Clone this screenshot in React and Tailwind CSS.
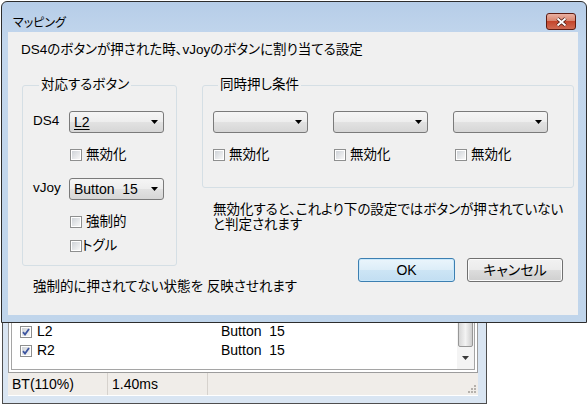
import React from "react";

const FONT = "font-['Liberation_Sans','Noto_Sans_CJK_JP',sans-serif]";

const Check = ({ checked }) => (
  <span className="flex h-[12px] w-[12px] shrink-0 border border-[#8e8f8f] bg-white p-[1px]">
    <span className="flex flex-1 items-center justify-center bg-linear-to-br from-[#cfd3d8] to-[#f7f7f7]">
      {checked && (
        <svg width="8" height="8" viewBox="0 0 8 8">
          <path d="M1 4.2 L3 6.5 L7 1" fill="none" stroke="#3d55a0" strokeWidth="1.8" />
        </svg>
      )}
    </span>
  </span>
);

const Arrow = () => (
  <svg width="7" height="4" viewBox="0 0 7 4" className="shrink-0">
    <path d="M0 0H7L3.5 4Z" fill="#000" />
  </svg>
);

const Combo = ({ value, focus }) => (
  <div className="flex h-[22px] w-[95px] shrink-0 items-center rounded-[3px] border border-[#7a7a7a] bg-[linear-gradient(#f5f5f5,#ededed_50%,#e2e2e2_50%,#d6d6d6)] pl-[4px] pr-[5px] text-[14px]">
    <span className={focus ? "flex-1 whitespace-pre leading-[16px] underline underline-offset-2" : "flex-1 whitespace-pre leading-[16px]"}>
      {value}
    </span>
    <Arrow />
  </div>
);

const CheckLabel = ({ label, tight }) => (
  <div className={tight ? "flex h-[16px] items-center" : "flex h-[16px] items-center gap-[4px]"}>
    <Check />
    <span className="leading-[16px]">{label}</span>
  </div>
);

const Button = ({ children, primary }) => (
  <div
    className={
      primary
        ? "flex h-[24px] w-[97px] items-center justify-center rounded-[3px] border border-[#3c7fb1] bg-[linear-gradient(#eaf5fc,#dcedf8_50%,#cde5f5_50%,#c2def2)] shadow-[inset_0_0_0_1px_#c9e8fb]"
        : "flex h-[24px] w-[96px] items-center justify-center rounded-[3px] border border-[#707070] bg-[linear-gradient(#f2f2f2,#ebebeb_50%,#dddddd_50%,#cfcfcf)] shadow-[inset_0_0_0_1px_#fbfbfb]"
    }
  >
    {children}
  </div>
);

const MainWindow = () => (
  <div className="absolute left-[2px] top-[250px] flex h-[154px] w-[485px] flex-col border border-[#4e4e4e] bg-[#d9e5f2] pl-[5px] pr-[8px] pb-[7px]">
    {/* list view with double edge */}
    <div className="flex flex-1 flex-col border border-[#9c9c9c] bg-white p-[2px]">
      <div className="flex flex-1 border border-[#a5a5a5] bg-white">
        <div className="flex flex-1 flex-col justify-end pb-[9px]">
          {["L2", "R2"].map((name) => (
            <div key={name} className="flex h-[19px] items-center">
              <div className="flex w-[209px] items-center gap-[5px] pl-[8px]">
                <Check checked />
                <span>{name}</span>
              </div>
              <span className="whitespace-pre">Button  15</span>
            </div>
          ))}
        </div>
        <div className="flex w-[17px] flex-col bg-[#f4f4f4] pb-[3px]">
          <div className="mx-[1px] mb-[2px] flex-1 rounded-b-[2px] border border-[#979797] bg-[linear-gradient(to_right,#d6d6d6,#f3f3f3_50%,#cdcdcd)]" />
          <div className="flex h-[17px] items-center justify-center">
            <svg width="7" height="4" viewBox="0 0 7 4">
              <path d="M0 0H7L3.5 4Z" fill="#3a3a3a" />
            </svg>
          </div>
        </div>
      </div>
    </div>
    {/* status bar */}
    <div className="flex h-[23px] items-center border-b border-white bg-[#f0ede9]">
      <div className="flex h-full w-[100px] items-center border-r border-[#d6d2cd] pl-[4px]">BT(110%)</div>
      <div className="flex h-full w-[100px] items-center border-r border-[#d6d2cd] pl-[4px]">1.40ms</div>
      <div className="flex h-full flex-1 items-end justify-end pb-[2px] pr-[2px]">
        <svg width="9" height="9" viewBox="0 0 9 9">
          <g fill="#b5b1ac">
            <rect x="7" y="1" width="2" height="2" />
            <rect x="4" y="4" width="2" height="2" />
            <rect x="7" y="4" width="2" height="2" />
            <rect x="1" y="7" width="2" height="2" />
            <rect x="4" y="7" width="2" height="2" />
            <rect x="7" y="7" width="2" height="2" />
          </g>
        </svg>
      </div>
    </div>
  </div>
);

const Dialog = () => (
  <div className="absolute left-[1px] top-[1px] flex h-[322px] w-[586px] flex-col rounded-t-[6px] border border-[#2d2d2d] bg-[linear-gradient(#b6cde8,#c3d7ed_40px,#c0d5eb)] pl-[6px] pr-[8px] pb-[7px]">
    {/* title bar */}
    <div className="flex h-[30px] items-center pl-[5px] pr-[2px] pt-[9px]">
      <span className="flex-1 font-['Noto_Sans_CJK_JP',sans-serif] text-[12px] leading-[16px] text-black">
        マッピング
      </span>
      <div className="flex h-[17px] w-[30px] items-center justify-center rounded-[3px] border border-[#5e1c12] bg-[linear-gradient(#eab0a2,#d98670_45%,#c4462c_50%,#cf6a52)]">
        <svg width="13" height="10" viewBox="0 0 13 10">
          <path d="M2.5 1.5L10.5 8.5M10.5 1.5L2.5 8.5" stroke="#4a1a12" strokeWidth="3.6" />
          <path d="M2.5 1.5L10.5 8.5M10.5 1.5L2.5 8.5" stroke="#ffffff" strokeWidth="1.9" />
        </svg>
      </div>
    </div>

    {/* client area */}
    <div className="flex flex-1 flex-col bg-[#f0f0f0] pl-[13px] pt-[10px] text-[13.5px] text-black">
      <p className="leading-[16px]">DS4のボタンが押された時、vJoyのボタンに割り当てる設定</p>

      <div className="mt-[19px] flex">
        {/* left column */}
        <div className="ml-[1px] flex w-[155px] shrink-0 flex-col">
          <fieldset className="w-[155px] rounded-[3px] border border-[#d5dfe5] pb-[11px] pl-[10px]">
            <legend className="ml-[6px] px-[2px] leading-[16px]">対応するボタン</legend>
            <div className="mt-[18px] flex items-center">
              <span className="mb-[3px] w-[36px] leading-[16px]">DS4</span>
              <Combo value="L2" focus />
            </div>
            <div className="mt-[14px] pl-[37px]">
              <CheckLabel label="無効化" />
            </div>
            <div className="mt-[15px] flex items-center">
              <span className="mb-[3px] w-[36px] leading-[16px]">vJoy</span>
              <Combo value="Button  15" />
            </div>
            <div className="mt-[14px] pl-[37px]">
              <CheckLabel label="強制的" />
            </div>
            <div className="mt-[8px] pl-[37px]">
              <CheckLabel label="トグル" tight />
            </div>
          </fieldset>
          <p className="ml-[11px] mt-[13px] whitespace-pre leading-[16px]">強制的に押されてない状態を 反映させれます</p>
        </div>

        {/* right column */}
        <div className="ml-[25px] flex w-[361px] shrink-0 flex-col">
          <fieldset className="w-[358px] rounded-[3px] border border-[#d5dfe5] pb-[24px] pl-[10px]">
            <legend className="ml-[5px] px-[2px] leading-[16px]">同時押し条件</legend>
            <div className="mt-[18px] grid grid-cols-[120px_120px_120px]">
              <Combo value="" />
              <Combo value="" />
              <Combo value="" />
            </div>
            <div className="mt-[14px] grid grid-cols-[120px_120px_120px]">
              <div>
                <CheckLabel label="無効化" />
              </div>
              <div className="pl-[1px]">
                <CheckLabel label="無効化" />
              </div>
              <div className="pl-[2px]">
                <CheckLabel label="無効化" />
              </div>
            </div>
          </fieldset>
          <p className="ml-[11px] mt-[14px] whitespace-nowrap leading-[15px]">
            無効化すると、これより下の設定ではボタンが押されていない
            <br />
            と判定されます
          </p>
          <div className="mt-[26px] flex justify-end gap-[12px] text-[14px]">
            <Button primary>OK</Button>
            <Button>キャンセル</Button>
          </div>
        </div>
      </div>
    </div>
  </div>
);

const App = () => {
  return (
    <div
      className={`relative h-[405px] w-[588px] overflow-hidden bg-white text-[14px] text-black ${FONT} [font-feature-settings:'palt']`}
    >
      <MainWindow />
      <Dialog />
    </div>
  );
};

export default App;
